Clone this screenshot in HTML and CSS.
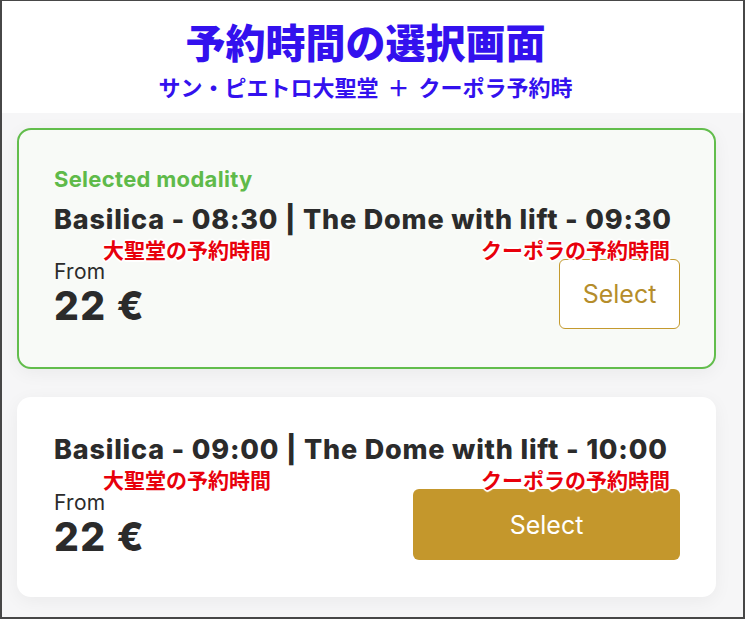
FILE: index.html
```html
<!DOCTYPE html>
<html lang="ja">
<head>
  <meta charset="UTF-8" />
  <meta name="viewport" content="width=device-width, initial-scale=1.0" />
  <title>予約時間の選択画面</title>
  <link rel="stylesheet" href="styles.css">
</head>
<body>
  <div class="frame">
    <!-- En-tête -->
    <div class="header">
      <h1 class="title">予約時間の選択画面</h1>
      <div class="subtitle">サン・ピエトロ大聖堂 ＋ クーポラ予約時</div>
    </div>

    <div class="list">
      <!-- Créneau sélectionné -->
      <div class="card selected">
        <div class="modality">Selected modality</div>
        <div class="slot">Basilica - 08:30 | The Dome with lift - 09:30</div>
        <div class="notes">
          <span>大聖堂の予約時間</span>
          <span>クーポラの予約時間</span>
        </div>
        <div class="bottom">
          <div class="price-box">
            <div class="from">From</div>
            <div class="price">22 €</div>
          </div>
          <button class="btn btn-outline">Select</button>
        </div>
      </div>

      <!-- Créneau suivant -->
      <div class="card">
        <div class="slot">Basilica - 09:00 | The Dome with lift - 10:00</div>
        <div class="notes">
          <span>大聖堂の予約時間</span>
          <span>クーポラの予約時間</span>
        </div>
        <div class="bottom">
          <div class="price-box">
            <div class="from">From</div>
            <div class="price">22 €</div>
          </div>
          <button class="btn btn-fill">Select</button>
        </div>
      </div>
    </div>
  </div>
</body>
</html>
```

FILE: styles.css
```css
* {
  box-sizing: border-box;
  margin: 0;
  padding: 0;
}

body {
  font-family: Inter, "Noto Sans CJK JP", sans-serif;
  color: #2b2b2b;
  background: #fff;
}

.frame {
  width: 745px;
  height: 619px;
  border: 2px solid #474747;
  border-top-width: 1px;
  background: #f6f6f7;
  overflow: hidden;
}

.header {
  height: 112px;
  background: #fff;
  text-align: center;
  padding-top: 20px;
  padding-right: 14px;
  font-family: "Noto Sans CJK JP", sans-serif;
  color: #3311ee;
}

.title {
  font-size: 40px;
  font-weight: 900;
  line-height: 40px;
}

.subtitle {
  margin-top: 13px;
  font-size: 22px;
  font-weight: 700;
  line-height: 24px;
  word-spacing: 4px;
}

.list {
  display: flex;
  flex-direction: column;
  gap: 28px;
  padding: 15px 27px 0 15px;
}

.card {
  background: #fff;
  border: 2px solid transparent;
  border-radius: 14px;
  padding: 36px 34px 35px 35px;
  box-shadow: 0 4px 18px rgba(0, 0, 0, 0.05);
}

.card.selected {
  background: #f8faf7;
  border-color: #62bd4c;
  padding-top: 37px;
  padding-bottom: 38px;
}

.modality {
  color: #5fba4a;
  font-size: 22px;
  font-weight: 700;
  line-height: 24px;
  letter-spacing: 0.3px;
  margin-bottom: 14px;
}

.slot {
  font-size: 27px;
  font-weight: 800;
  line-height: 30px;
  letter-spacing: 0.8px;
  white-space: nowrap;
}

.notes {
  position: relative;
  z-index: 2;
  display: flex;
  justify-content: space-between;
  padding: 0 10px 0 49px;
  margin-top: 3px;
  margin-bottom: -1px;
  font-family: "Noto Sans CJK JP", sans-serif;
  font-size: 21px;
  font-weight: 700;
  line-height: 22px;
  color: #e8000b;
  text-shadow: 1px 1px 0 #fff, -1px -1px 0 #fff, 1px -1px 0 #fff, -1px 1px 0 #fff,
    0 2px 1px #fff, 0 -2px 1px #fff, 2px 0 1px #fff, -2px 0 1px #fff;
}

.bottom {
  display: flex;
  justify-content: space-between;
  align-items: center;
}

.from {
  font-size: 21px;
  line-height: 24px;
  letter-spacing: 0.3px;
}

.price {
  font-size: 39px;
  font-weight: 800;
  line-height: 44px;
  letter-spacing: 1.5px;
}

.btn {
  font-family: Inter, sans-serif;
  font-size: 25px;
  height: 70px;
  border-radius: 6px;
  cursor: pointer;
}

.btn-outline {
  width: 121px;
  background: #fff;
  border: 1.5px solid #c49a2e;
  color: #b58d2b;
}

.btn-fill {
  width: 267px;
  height: 71px;
  background: #c4972c;
  border: none;
  color: #fff;
}
```
